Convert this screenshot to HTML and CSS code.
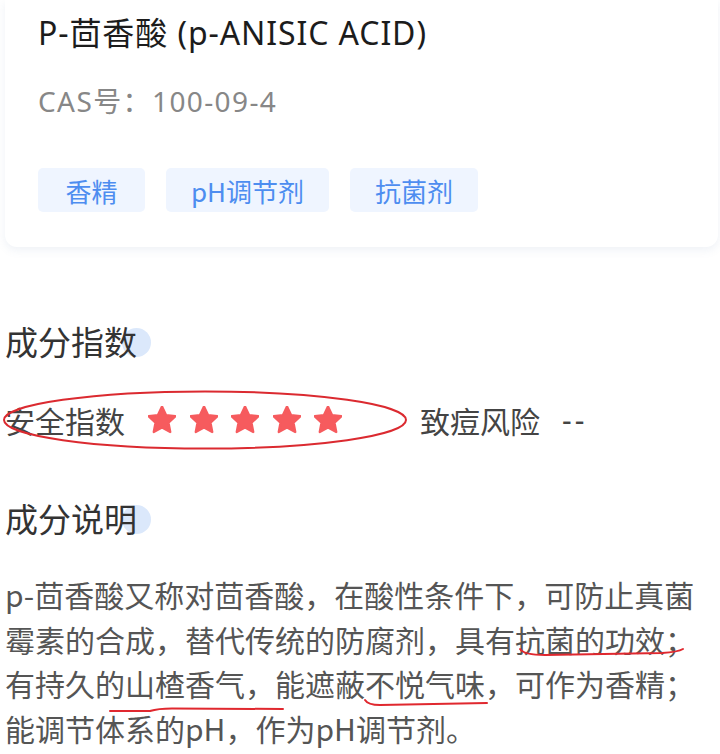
FILE: index.html
```html
<!DOCTYPE html>
<html lang="zh-CN">
<head>
<meta charset="utf-8">
<title>P-茴香酸</title>
<link rel="stylesheet" href="styles.css">
</head>
<body>
<div class="page">
  <section class="card">
    <h1 class="name">P-茴香酸 (p-ANISIC ACID)</h1>
    <div class="cas">CAS号：100-09-4</div>
    <div class="tags">
      <span class="tag">香精</span>
      <span class="tag">pH调节剂</span>
      <span class="tag">抗菌剂</span>
    </div>
  </section>

  <h2 class="sec-title">成分指数</h2>
  <div class="index-row">
    <span class="label">安全指数</span>
    <span class="stars">
      <svg class="star" viewBox="2.4 2.2 19.2 19.2"><path d="M12 2.6l2.75 5.85 6.35.8-4.65 4.4 1.2 6.350L12 16.9l-5.65 3.1 1.2-6.35-4.65-4.4 6.35-.8z"/></svg>
      <svg class="star" viewBox="2.4 2.2 19.2 19.2"><path d="M12 2.6l2.75 5.85 6.35.8-4.65 4.4 1.2 6.35L12 16.9l-5.65 3.1 1.2-6.35-4.65-4.4 6.35-.8z"/></svg>
      <svg class="star" viewBox="2.4 2.2 19.2 19.2"><path d="M12 2.6l2.75 5.85 6.35.8-4.65 4.4 1.2 6.35L12 16.9l-5.65 3.1 1.2-6.35-4.65-4.4 6.35-.8z"/></svg>
      <svg class="star" viewBox="2.4 2.2 19.2 19.2"><path d="M12 2.6l2.75 5.85 6.35.8-4.65 4.4 1.2 6.35L12 16.9l-5.65 3.1 1.2-6.35-4.65-4.4 6.35-.8z"/></svg>
      <svg class="star" viewBox="2.4 2.2 19.2 19.2"><path d="M12 2.6l2.75 5.85 6.35.8-4.65 4.4 1.2 6.35L12 16.9l-5.65 3.1 1.2-6.35-4.65-4.4 6.35-.8z"/></svg>
    </span>
    <span class="label risk">致痘风险</span>
    <span class="label risk-val">--</span>
    <svg class="ellipse-mark" viewBox="0 0 410 64" width="410" height="64"><ellipse cx="203" cy="32" rx="201" ry="28.5"/></svg>
  </div>

  <h2 class="sec-title">成分说明</h2>
  <div class="desc">
    <p class="desc-text">p-茴香酸又称对茴香酸，在酸性条件下，可防止真菌霉素的合成，替代传统的防腐剂，具有抗菌的功效；有持久的山楂香气，能遮蔽不悦气味，可作为香精；能调节体系的pH，作为pH调节剂。</p>
    <svg class="underline-mark" viewBox="0 0 720 180" width="720" height="180">
      <path d="M520 77 Q524 83 545 83 L662 81 Q678 80 683 77"/>
      <path d="M110 139 L150 139 Q158 136.5 172 136.5 L283 137"/>
      <path d="M365 128 Q368 133 380 133 L487 131"/>
    </svg>
  </div>
</div>
</body>
</html>
```

FILE: styles.css
```css
* { box-sizing: border-box; }

html, body {
  margin: 0;
  padding: 0;
  background: #ffffff;
}

body {
  font-family: "Noto Sans CJK SC", "Noto Sans", sans-serif;
  color: #333;
}

.page {
  padding: 0 5px;
}

.card {
  margin: 0 -3px 0 0;
  padding: 13px 33px 35px;
  background: #fff;
  border-radius: 0 0 12px 12px;
  box-shadow: 0 3px 10px rgba(90, 120, 170, 0.10);
}

.name {
  margin: 0;
  font-family: "Noto Sans", "Noto Sans CJK SC", sans-serif;
  font-size: 32px;
  line-height: 40px;
  font-weight: 400;
  letter-spacing: 0.9px;
  color: #1c1c1c;
}

.cas {
  margin-top: 28px;
  font-family: "Noto Sans", "Noto Sans CJK SC", sans-serif;
  font-size: 28px;
  line-height: 40px;
  letter-spacing: 1.4px;
  color: #878787;
}

.tags {
  margin-top: 47px;
  display: flex;
  gap: 21px;
}

.tag {
  min-width: 107px;
  height: 44px;
  padding: 0 25px;
  display: flex;
  align-items: center;
  justify-content: center;
  font-size: 26px;
  color: #4d8df0;
  background: #eff5ff;
  border-radius: 5px;
}

.sec-title {
  position: relative;
  z-index: 0;
  display: inline-block;
  margin: 72px 0 0;
  font-size: 33px;
  line-height: 44px;
  font-weight: 400;
  color: #333;
}

.sec-title::after {
  content: "";
  position: absolute;
  z-index: -1;
  right: -14px;
  top: 9px;
  width: 29px;
  height: 29px;
  border-radius: 50%;
  background: #dbe8fb;
}

.index-row {
  position: relative;
  margin-top: 37px;
  height: 40px;
  display: flex;
  align-items: center;
}

.label {
  font-size: 30px;
  line-height: 40px;
  color: #444;
}

.stars {
  margin-left: 23px;
  display: flex;
  gap: 13.5px;
}

.star {
  width: 28px;
  height: 28px;
  display: block;
}

.star path {
  fill: #f65b5e;
  stroke: #f65b5e;
  stroke-width: 1.6;
  stroke-linejoin: round;
}

.risk {
  margin-left: 78px;
}

.risk-val {
  margin-left: 22px;
  font-family: "Noto Sans", sans-serif;
  letter-spacing: 3px;
}

.ellipse-mark {
  position: absolute;
  left: -3px;
  top: -12px;
  overflow: visible;
}

.ellipse-mark ellipse {
  fill: none;
  stroke: #db2a30;
  stroke-width: 2;
}

.index-row + .sec-title {
  margin-top: 56px;
}

.desc {
  position: relative;
  margin-top: 32px;
}

.desc-text {
  margin: 0;
  font-size: 30px;
  line-height: 44.5px;
  color: #555;
}

.underline-mark {
  position: absolute;
  left: -5px;
  top: 0;
  overflow: visible;
}

.underline-mark path {
  fill: none;
  stroke: #e0282f;
  stroke-width: 2;
  stroke-linecap: round;
}
```
